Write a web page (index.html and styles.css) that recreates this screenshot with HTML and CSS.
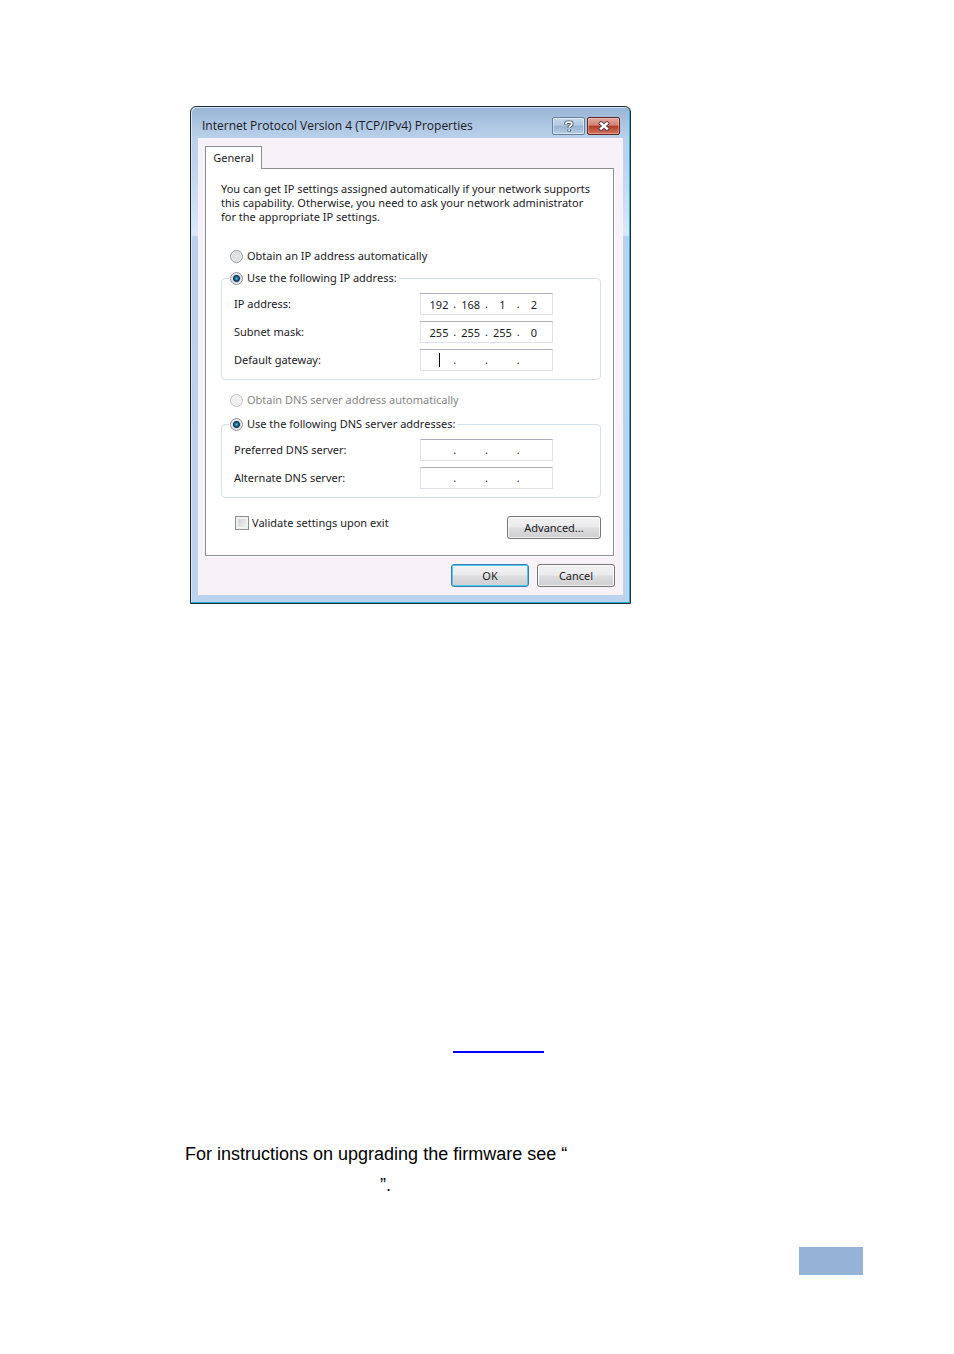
FILE: index.html
```html
<!DOCTYPE html>
<html lang="en">
<head>
    <meta charset="UTF-8">
    <meta name="viewport" content="width=device-width, initial-scale=1.0">
    <title>Internet Protocol Version 4 (TCP/IPv4) Properties</title>
    <link rel="stylesheet" href="styles.css">
</head>
<body>
    <main class="page">
        <form class="window">
            <header class="titlebar">
                <h1>Internet Protocol Version 4 (TCP/IPv4) Properties</h1>
                <button type="button" class="title-btn" aria-label="Help">
                    <svg width="12" height="13" viewBox="0 0 12 13" fill="none">
                        <path d="M3 4.5V3.5Q3 2.2 4.5 2.2H7Q8.8 2.2 8.8 3.8Q8.8 5 7.5 5.8Q6.2 6.6 6.2 8M6.2 9.6V11.4" stroke="#4d5868" stroke-width="3.6"/>
                        <path d="M3 4.3V3.5Q3 2.2 4.5 2.2H7Q8.8 2.2 8.8 3.8Q8.8 5 7.5 5.8Q6.2 6.6 6.2 7.8M6.2 9.6V11" stroke="#fff" stroke-width="1.8"/>
                    </svg>
                </button>
                <button type="button" class="title-btn close" aria-label="Close">
                    <svg width="12" height="10" viewBox="0 0 12 10" fill="none">
                        <path d="M1.5 1L10.5 9M10.5 1L1.5 9" stroke="#5d4650" stroke-width="4.4"/>
                        <path d="M2.2 1.6L9.8 8.4M9.8 1.6L2.2 8.4" stroke="#fff" stroke-width="2.4"/>
                    </svg>
                </button>
            </header>
            <div class="client">
                <button type="button" class="tab">General</button>
                <section class="panel">
                    <p class="intro">You can get IP settings assigned automatically if your network supports<br>this capability. Otherwise, you need to ask your network administrator<br>for the appropriate IP settings.</p>

                    <div class="option ip-auto">
                        <input type="radio" name="ip" id="ipAuto">
                        <label for="ipAuto">Obtain an IP address automatically</label>
                    </div>
                    <fieldset class="group-ip">
                        <legend class="option">
                            <input type="radio" name="ip" id="ipManual" checked>
                            <label for="ipManual">Use the following IP address:</label>
                        </legend>
                        <div class="row">
                            <label for="ip1">IP address:</label>
                            <div class="address">
                                <input type="text" id="ip1" value="192"><span>.</span><input type="text" aria-label="IP address, part 2" value="168"><span>.</span><input type="text" aria-label="IP address, part 3" value="1"><span>.</span><input type="text" aria-label="IP address, part 4" value="2">
                            </div>
                        </div>
                        <div class="row">
                            <label for="mask1">Subnet mask:</label>
                            <div class="address">
                                <input type="text" id="mask1" value="255"><span>.</span><input type="text" aria-label="Subnet mask, part 2" value="255"><span>.</span><input type="text" aria-label="Subnet mask, part 3" value="255"><span>.</span><input type="text" aria-label="Subnet mask, part 4" value="0">
                            </div>
                        </div>
                        <div class="row">
                            <label for="gateway1">Default gateway:</label>
                            <div class="address">
                                <input type="text" id="gateway1" class="caret"><span>.</span><input type="text" aria-label="Default gateway, part 2"><span>.</span><input type="text" aria-label="Default gateway, part 3"><span>.</span><input type="text" aria-label="Default gateway, part 4">
                            </div>
                        </div>
                    </fieldset>

                    <div class="option dns-auto">
                        <input type="radio" name="dns" id="dnsAuto" disabled>
                        <label for="dnsAuto">Obtain DNS server address automatically</label>
                    </div>
                    <fieldset class="group-dns">
                        <legend class="option">
                            <input type="radio" name="dns" id="dnsManual" checked>
                            <label for="dnsManual">Use the following DNS server addresses:</label>
                        </legend>
                        <div class="row">
                            <label for="dns1">Preferred DNS server:</label>
                            <div class="address">
                                <input type="text" id="dns1"><span>.</span><input type="text" aria-label="Preferred DNS server, part 2"><span>.</span><input type="text" aria-label="Preferred DNS server, part 3"><span>.</span><input type="text" aria-label="Preferred DNS server, part 4">
                            </div>
                        </div>
                        <div class="row">
                            <label for="alt1">Alternate DNS server:</label>
                            <div class="address">
                                <input type="text" id="alt1"><span>.</span><input type="text" aria-label="Alternate DNS server, part 2"><span>.</span><input type="text" aria-label="Alternate DNS server, part 3"><span>.</span><input type="text" aria-label="Alternate DNS server, part 4">
                            </div>
                        </div>
                    </fieldset>

                    <div class="panel-footer">
                        <div class="validate">
                            <input type="checkbox" id="validate">
                            <label for="validate">Validate settings upon exit</label>
                        </div>
                        <button type="button" class="btn btn-wide">Advanced...</button>
                    </div>
                </section>
                <div class="actions">
                    <button type="button" class="btn btn-default">OK</button>
                    <button type="button" class="btn">Cancel</button>
                </div>
            </div>
        </form>

        <p class="link-line"><a href="#" class="blank-link" aria-label="Link"></a></p>
        <p class="note">For instructions on upgrading the firmware see “<br><span class="blank"></span>”.</p>
        <div class="page-number"></div>
    </main>
</body>
</html>
```
FILE: styles.css
```css
* {
    box-sizing: border-box;
}
body {
    margin: 0;
    background-color: white;
    color: #000;
    font-family: "Liberation Sans", Arial, sans-serif;
    font-size: 18px;
}
.page {
    padding: 106px 91px 79px 185px;
}

/* Dialog window */
.window {
    max-width: 441px;
    margin-left: 5px;
    padding: 0 7px 8px;
    border: 1px solid #22303a;
    border-radius: 6px 6px 0 0;
    background: linear-gradient(#98b5d5 0, #bbd1ea 31px, #bbd2ee 50px, #dbe8f8 128px, #b9d1ee 130px, #bcd3ef 100%);
    box-shadow: inset -1px -1px #23b0ce, inset 1px 1px #d5e4f2;
    color: #1a1a1e;
    font-family: "Noto Sans", Tahoma, sans-serif;
    font-size: 11px;
    line-height: 14px;
}
.window button,
.window input {
    margin: 0;
    color: inherit;
    font: inherit;
}
.titlebar {
    display: flex;
    height: 31px;
    padding: 10px 3px 0 4px;
    gap: 2px;
}
.titlebar h1 {
    flex-grow: 1;
    margin: 0;
    padding-top: 2px;
    font-family: "Open Sans", "Segoe UI", sans-serif;
    font-size: 12px;
    font-weight: normal;
}
.title-btn {
    display: flex;
    align-items: center;
    justify-content: center;
    width: 33px;
    height: 18px;
    padding: 0;
    border: 1px solid #6a7f99;
    border-radius: 2px;
    background: linear-gradient(#c3d6eb 0, #b4cae3 45%, #98b3d1 50%, #b5cde8 100%);
    box-shadow: inset 0 0 0 1px rgba(255, 255, 255, 0.5);
}
.title-btn.close {
    border-color: #60272c;
    background: linear-gradient(#e3a79d 0, #d38374 45%, #b53a23 50%, #cf7560 100%);
    box-shadow: inset 0 0 0 1px rgba(255, 220, 210, 0.4);
}
.client {
    padding: 8px 9px 8px 7px;
    background-color: #f6f2f7;
}

/* Tab and its panel */
.tab {
    display: block;
    position: relative;
    width: 57px;
    height: 22px;
    padding: 0;
    border: 1px solid #8c8e96;
    border-bottom: none;
    background-color: white;
}
.panel {
    padding: 13px 12px 16px 15px;
    border: 1px solid #8c8e96;
    background-color: white;
    box-shadow: 1px 1px white;
}
.tab::after {
    position: absolute;
    right: 0;
    bottom: -1px;
    left: 0;
    height: 1px;
    background-color: white;
    content: "";
}
.intro {
    margin: 0 0 25px;
}
.option {
    display: flex;
    align-items: center;
    gap: 4px;
    height: 14px;
}
.option.ip-auto,
.option.dns-auto {
    padding-left: 9px;
}
input[type="radio"] {
    appearance: none;
    width: 13px;
    height: 13px;
    border: 1px solid #8f9296;
    border-radius: 50%;
    background: radial-gradient(#e6e6e9 0, #dcdde0 50%, #f5f5f5 75%);
}
input[type="radio"]:checked {
    background: radial-gradient(circle at 50% 50%, #5fc8e8 0, #14567e 2px, #10385a 3px, #d4dade 4px, #f1f3f5 6px);
}
input[type="radio"]:disabled {
    border-color: #c2c2c6;
    background: #f0f0f2;
}
input:disabled + label {
    color: #858585;
}
fieldset {
    min-width: 0;
    margin: 0;
    padding: 8px 12px;
    border: 1px solid #d3dfe9;
    border-radius: 4px;
}
fieldset legend {
    margin-left: -5px;
    padding: 0 2px 0 1px;
}
.group-ip {
    margin: 8px 0 13px;
}
.group-dns {
    margin-top: 10px;
}
.row {
    display: flex;
    align-items: center;
}
.row + .row {
    margin-top: 6px;
}
.row > label {
    width: 186px;
}
.address {
    display: flex;
    align-items: center;
    width: 133px;
    height: 22px;
    padding: 0 4px;
    border: 1px solid #dfe0ea;
    border-top-color: #abadb8;
    background-color: white;
}
.address input {
    width: 28px;
    height: 16px;
    padding: 0;
    border: none;
    background-color: transparent;
    text-align: center;
}
.address span {
    width: 4px;
    text-align: center;
}
.address .caret {
    background: linear-gradient(#000, #000) center / 1px 14px no-repeat;
}
.panel-footer {
    display: flex;
    justify-content: space-between;
    margin-top: 18px;
}
.validate {
    display: flex;
    align-items: center;
    height: 14px;
    padding-left: 14px;
    gap: 3px;
}
input[type="checkbox"] {
    appearance: none;
    width: 14px;
    height: 14px;
    border: 1px solid #8c8e92;
    background: linear-gradient(135deg, #cbcdd3, #f6f6f7);
    box-shadow: inset 0 0 0 2px #f1f1f2;
}

/* Push buttons */
.btn {
    width: 78px;
    height: 23px;
    padding: 0;
    border: 1px solid #77777a;
    border-radius: 3px;
    background: linear-gradient(#f3f2f3 0, #ebeaec 48%, #dddcde 52%, #cfced0 100%);
    box-shadow: inset 0 0 0 1px rgba(255, 255, 255, 0.7);
}
.btn-wide {
    width: 94px;
}
.btn-default {
    border-color: #3c7fb1;
    box-shadow: inset 0 0 0 1px #4cc8ee;
}
.actions {
    display: flex;
    justify-content: flex-end;
    gap: 8px;
    margin: 8px -1px 0 0;
}

/* Text under the window */
.link-line {
    margin: 428px 0 0 268px;
    line-height: 20px;
}
.blank-link {
    display: block;
    width: 91px;
    height: 21px;
    border-bottom: 2px solid #0000ff;
}
.note {
    margin: 86px 0 0;
    line-height: 31px;
}
.blank {
    display: inline-block;
    width: 195px;
}
.page-number {
    width: 64px;
    height: 28px;
    margin: 46px 0 0 auto;
    background-color: #95b3d7;
}
```
